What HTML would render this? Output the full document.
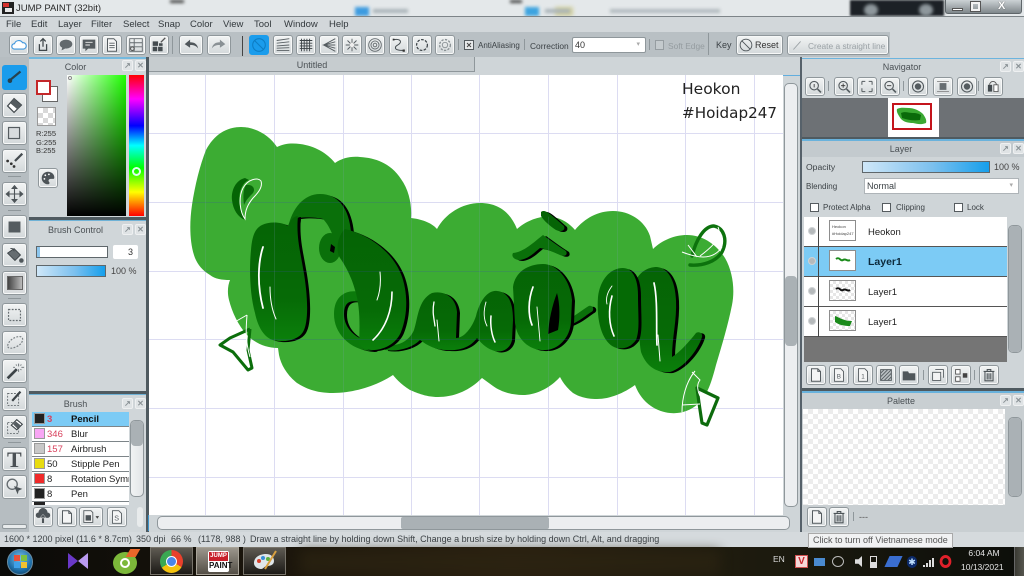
<!DOCTYPE html>
<html lang="en"><head><meta charset="utf-8"><title>JUMP PAINT</title>
<style>
html,body{margin:0;padding:0}
body{width:1024px;height:576px;overflow:hidden;position:relative;background:#d2d7da;font-family:"Liberation Sans",sans-serif;font-size:9px;color:#3c4246}
div,span{position:absolute;box-sizing:border-box;white-space:nowrap}
.b{width:20px;height:20px;border:1px solid #8f979b;border-radius:3px;background:linear-gradient(#f2f4f4,#d3d8da);box-shadow:inset 0 0 0 1px #f7f8f8;overflow:hidden}
.b svg{position:absolute;left:0;top:0;width:100%;height:100%}
.t{text-align:center;color:#4a5054;font-size:9px}
.bar{background:linear-gradient(90deg,#cfe7f8,#7cc0ee 55%,#159fec);border:1px solid #5f676b}
.pt{background:#c3cace}
.px{width:11px;height:11px;background:#dfe3e5;border:1px solid #eef0f1;border-radius:2px;color:#8a9296;font-size:8px;line-height:9px;text-align:center;font-weight:bold}
.ck{width:9px;height:9px;background:#fff;border:1px solid #555b5f}
.row{left:32px;width:97px;height:15px;background:#fff;border-bottom:1px solid #7d8589;color:#222;font-size:9.5px;line-height:15px}
.sw{left:2px;top:1px;width:11px;height:11px;border:1px solid #9a9a9a}
.n{left:15px;color:#d8405c}
.nm{left:39px}
.lr{left:804px;width:203px;height:30px;background:#fff;border-bottom:1px solid #555;color:#222;font-size:9.5px;line-height:31px}
.th{left:25px;top:3px;width:27px;height:21px;border:1px solid #8d8d8d;background:repeating-conic-gradient(#e6e6e6 0 25%,#fff 0 50%) 0 0/6px 6px}
.dot{left:4px;top:10px;width:8px;height:8px;border-radius:50%;background:#b5b9bb;border:1px solid #cfd2d4}
.sep{background:#8f979b}
.scr{background:linear-gradient(90deg,#f1f3f4,#e2e5e7);border:1px solid #8f979b;border-radius:5px}
.thm{background:#aab1b5;border-radius:4px}
.menu span{top:19px;font-size:9.5px;color:#33393d}
.s{filter:drop-shadow(3px 1.5px 0 #000)}
</style></head>
<body>
<svg width="0" height="0" style="position:absolute"><defs>
<symbol id="doc" viewBox="0 0 20 20"><path d="M5 3h7l3 3v11H5z M12 3v3h3" fill="#f4f5f5" stroke="#555c60" stroke-width="1.1"/></symbol>
<symbol id="doclines" viewBox="0 0 20 20"><path d="M5 3h7l3 3v11H5z" fill="#f4f5f5" stroke="#555c60" stroke-width="1.1"/><path d="M7 8h6M7 10.5h6M7 13h6" stroke="#555c60"/></symbol>
<symbol id="trash" viewBox="0 0 20 20"><path d="M4 6h12M8 6V4h4v2M5.5 6.5v10h9v-10M8 8v7M10 8v7M12 8v7" fill="none" stroke="#4d5458" stroke-width="1.2"/></symbol>
</defs></svg>

<!-- title bar -->
<div style="left:0;top:0;width:1024px;height:16px;background:#e4e8ea;overflow:hidden">
 <div style="left:555px;top:7px;width:18px;height:9px;background:#c9c47a;filter:blur(2px);opacity:.7"></div>
 <div style="left:355px;top:7px;width:14px;height:9px;background:#3d9be0;filter:blur(1.5px)"></div>
 <div style="left:525px;top:7px;width:14px;height:9px;background:#3da4e0;filter:blur(1.5px)"></div>
 <div style="left:373px;top:9px;width:35px;height:4px;background:#a9b3b8;filter:blur(1.5px)"></div>
 <div style="left:545px;top:9px;width:25px;height:4px;background:#a9b3b8;filter:blur(1.5px)"></div>
 <div style="left:610px;top:9px;width:110px;height:4px;background:#b2babe;filter:blur(1.5px)"></div>
 <div style="left:170px;top:0;width:14px;height:3px;background:#444;filter:blur(1.5px)"></div>
 <div style="left:510px;top:0;width:12px;height:3px;background:#444;filter:blur(1.5px)"></div>
 <div style="left:850px;top:0;width:94px;height:16px;background:#1c2126;filter:blur(1px)"></div>
 <div style="left:864px;top:4px;width:14px;height:12px;border-radius:50%;background:#8e979c;filter:blur(1.5px)"></div>
 <div style="left:919px;top:4px;width:14px;height:12px;border-radius:50%;background:#8e979c;filter:blur(1.5px)"></div>
 <div style="left:945px;top:0;width:77px;height:14px;background:linear-gradient(#ccd2d5,#7f878b);border:1px solid #5f666a;border-top:0;border-radius:0 0 3px 3px"></div>
 <div style="left:952px;top:8px;width:11px;height:3px;background:#fff;border:1px solid #555"></div>
 <div style="left:971px;top:2px;width:9px;height:9px;background:transparent;border:2px solid #f2f2f2;outline:1px solid #555"></div>
 <div style="left:998px;top:0;color:#fff;font-size:11px;font-weight:bold;text-shadow:0 0 1px #333">X</div>
 <div style="left:2px;top:2px;width:12px;height:12px;background:#222"></div>
 <div style="left:3px;top:3px;width:6px;height:4px;background:#d6322d"></div>
 <div style="left:5px;top:8px;width:7px;height:4px;background:#e8e8e8"></div>
 <div style="left:16px;top:3px;font-size:9.5px;color:#2a2a2a">JUMP PAINT (32bit)</div>
</div>
<div style="left:0;top:16px;width:1024px;height:1px;background:#7d8488"></div>

<!-- menu -->
<div class="menu" style="left:0;top:0;width:1024px;height:32px">
<span style="left:6px">File</span><span style="left:31px">Edit</span><span style="left:58px">Layer</span><span style="left:91px">Filter</span><span style="left:123px">Select</span><span style="left:158px">Snap</span><span style="left:190px">Color</span><span style="left:223px">View</span><span style="left:254px">Tool</span><span style="left:284px">Window</span><span style="left:329px">Help</span>
</div>

<!-- toolbar -->
<div style="left:0;top:32px;width:1024px;height:25px;background:#d2d7da"></div>
<div style="left:0;top:32px;width:890px;height:25px;background:#b9c0c4"></div>
<div class="b" style="left:9px;top:35px"><svg viewBox="0 0 20 20"><path d="M5 14.5a3 3 0 0 1 0-6 5 5 0 0 1 9-1 3.5 3.5 0 0 1 1 7z" fill="#fff" stroke="#3f97dd" stroke-width="1.2"/></svg></div>
<div class="b" style="left:33px;top:35px"><svg viewBox="0 0 20 20"><path d="M6 9v7h8V9M10 12V3M7 6l3-3 3 3" fill="none" stroke="#3f464a" stroke-width="1.4"/></svg></div>
<div class="b" style="left:56px;top:35px"><svg viewBox="0 0 20 20"><ellipse cx="10" cy="9" rx="7" ry="5" fill="#62696d"/><path d="M6 12l-1 4 4-2z" fill="#62696d"/></svg></div>
<div class="b" style="left:79px;top:35px"><svg viewBox="0 0 20 20"><path d="M3 4h14v10H9l-3 3v-3H3z" fill="#555c60"/><path d="M6 7h8M6 10h5" stroke="#eee"/></svg></div>
<div class="b" style="left:102px;top:35px"><svg><use href="#doclines"/></svg></div>
<div class="b" style="left:126px;top:35px"><svg viewBox="0 0 20 20"><path d="M3 3h14v14H3zM3 7.5h14M3 12h14M8 3v14" fill="none" stroke="#62696d"/><circle cx="6" cy="14" r="2" fill="none" stroke="#444"/></svg></div>
<div class="b" style="left:149px;top:35px"><svg viewBox="0 0 20 20"><path d="M3 6h6v5H3zM10 8h4v3h-4zM3 12h5v5H3zM9 12h5v5H9z" fill="#454c50"/><path d="M12 7l5-5" stroke="#555" stroke-width="1.5"/></svg></div>
<div class="sep" style="left:172px;top:36px;width:1px;height:18px"></div>
<div class="b" style="left:179px;top:35px;width:24px"><svg viewBox="0 0 24 20"><path d="M5 9l6-5v3c5 0 8 2 9 7-2-3-5-4-9-4v3z" fill="#50575b"/></svg></div>
<div class="b" style="left:207px;top:35px;width:24px"><svg viewBox="0 0 24 20"><path d="M19 9l-6-5v3c-5 0-8 2-9 7 2-3 5-4 9-4v3z" fill="#8a9195"/></svg></div>
<div class="sep" style="left:242px;top:36px;width:1px;height:20px;background:#444"></div>
<div class="b" style="left:249px;top:35px;background:#1a9cec;border-color:#1a9cec;box-shadow:none"><svg viewBox="0 0 20 20"><circle cx="10" cy="10" r="7" fill="none" stroke="#0d7dc4" stroke-width="1.2"/><path d="M5 5l10 10" stroke="#0d7dc4" stroke-width="1.2"/></svg></div>
<div class="b" style="left:273px;top:35px"><svg viewBox="0 0 20 20"><path d="M3 5l14-2M3 8l14-1.5M3 11l14-1M3 13.5l14-.5M3 16h14" stroke="#5a6165"/></svg></div>
<div class="b" style="left:296px;top:35px"><svg viewBox="0 0 20 20"><path d="M5 3v14M8 3v14M11 3v14M14 3v14M3 5h14M3 8h14M3 11h14M3 14h14" stroke="#3c4347"/></svg></div>
<div class="b" style="left:319px;top:35px"><svg viewBox="0 0 20 20"><path d="M17 3L4 10l13 7M17 6.5L4 10l13 3.5M4 10h13" fill="none" stroke="#555c60"/></svg></div>
<div class="b" style="left:342px;top:35px"><svg viewBox="0 0 20 20"><path d="M10 3v14M3 10h14M5 5l10 10M15 5L5 15" stroke="#555c60"/><circle cx="10" cy="10" r="2.5" fill="#eee"/></svg></div>
<div class="b" style="left:365px;top:35px"><svg viewBox="0 0 20 20" fill="none" stroke="#62696d"><circle cx="10" cy="10" r="7"/><circle cx="10" cy="10" r="4.5"/><circle cx="10" cy="10" r="2"/></svg></div>
<div class="b" style="left:389px;top:35px"><svg viewBox="0 0 20 20"><path d="M4 4c6-1 9 1 7 4s-5 2-5 5 6 3 9 3" fill="none" stroke="#444b4f" stroke-width="1.1"/><rect x="3" y="3" width="2" height="2" fill="#333"/><rect x="14" y="15" width="2.5" height="2.5" fill="#333"/></svg></div>
<div class="b" style="left:412px;top:35px"><svg viewBox="0 0 20 20"><circle cx="10" cy="10" r="6" fill="none" stroke="#3f464a" stroke-width="1.4" stroke-dasharray="3 1.5"/></svg></div>
<div class="b" style="left:435px;top:35px"><svg viewBox="0 0 20 20"><circle cx="10" cy="10" r="3" fill="none" stroke="#8a9195"/><circle cx="10" cy="10" r="6" fill="none" stroke="#8a9195" stroke-width="1.5" stroke-dasharray="2.5 1.5"/></svg></div>
<div class="sep" style="left:458px;top:39px;width:1px;height:11px"></div>
<div class="ck" style="left:464px;top:40px;height:10px;width:10px;background:#e8eaeb"></div>
<svg style="position:absolute;left:464px;top:40px" width="10" height="10"><path d="M3 3l4 4M7 3l-4 4" stroke="#444"/></svg>
<div style="left:478px;top:41px;color:#3c4246;font-size:8px">AntiAliasing</div>
<div class="sep" style="left:524px;top:39px;width:1px;height:11px"></div>
<div style="left:530px;top:41px;color:#3c4246;font-size:8.4px">Correction</div>
<div style="left:572px;top:37px;width:74px;height:16px;background:#fff;border:1px solid #8f979b;border-radius:2px;padding:2px 2px;color:#333">40<span style="right:5px;top:2px;font-size:7px;color:#aaa">&#9662;</span></div>
<div class="sep" style="left:649px;top:39px;width:1px;height:11px"></div>
<div style="left:655px;top:40px;width:9px;height:10px;border:1px solid #969da1;background:#c4cacd"></div>
<div style="left:668px;top:41px;color:#959ca0;font-size:8.4px">Soft Edge</div>
<div class="sep" style="left:708px;top:33px;width:1px;height:22px"></div>
<div style="left:716px;top:40px;color:#3c4246">Key</div>
<div class="b" style="left:736px;top:35px;width:47px"><svg viewBox="0 0 47 20" preserveAspectRatio="xMinYMin"><circle cx="10" cy="10" r="6.5" fill="none" stroke="#4d5458"/><path d="M5.5 5.500l9 9" stroke="#4d5458"/></svg><span style="left:18px;top:4px;color:#333">Reset</span></div>
<div class="b" style="left:787px;top:35px;width:102px"><svg viewBox="0 0 102 20" preserveAspectRatio="xMinYMin"><path d="M6 15l8-9" stroke="#9aa1a5"/></svg><span style="left:20px;top:5px;color:#9aa1a5;font-size:8.4px">Create a straight line</span></div>

<!-- left tools -->
<div style="left:0;top:57px;width:29px;height:475px;background:#b6bdc1"></div>
<div class="b" style="left:2px;top:65px;width:25px;height:25px;background:#1a9cec;border-color:#1a9cec;box-shadow:none"><svg viewBox="0 0 25 25"><path d="M19 6L8 15" stroke="#27424f" stroke-width="2.4"/><circle cx="7.5" cy="16" r="2.5" fill="#27424f"/></svg></div>
<div class="b" style="left:2px;top:93px;width:25px;height:25px"><svg viewBox="0 0 25 25"><path d="M12 5l8 7-8 8-7-7z" fill="#fff" stroke="#444b4f" stroke-width="1.4"/><path d="M8 10l8 7 3-5-7-7z" fill="#555c60"/></svg></div>
<div class="b" style="left:2px;top:121px;width:25px;height:24px"><svg viewBox="0 0 25 24"><rect x="6" y="6" width="12" height="12" fill="#d8dcde" stroke="#555c60" stroke-width="1.3"/></svg></div>
<div class="b" style="left:2px;top:149px;width:25px;height:24px"><svg viewBox="0 0 25 24"><path d="M21 4l-8 8" stroke="#454c50" stroke-width="2.5"/><circle cx="5" cy="12" r="1.5" fill="#333"/><circle cx="9" cy="15" r="1.5" fill="#333"/><circle cx="12" cy="18" r="1.5" fill="#333"/></svg></div>
<div class="sep" style="left:8px;top:176px;width:13px;height:1px"></div>
<div class="b" style="left:2px;top:182px;width:25px;height:24px"><svg viewBox="0 0 25 24"><path d="M12.5 4v16M4.500 12h16M12.5 3l-2.500 3h5zM12.5 21l-2.500-3h5zM3.500 12l3-2.500v5zM21.500 12l-3-2.500v5z" fill="#4d5458" stroke="#4d5458" stroke-width="1.2"/></svg></div>
<div class="sep" style="left:8px;top:210px;width:13px;height:1px"></div>
<div class="b" style="left:2px;top:215px;width:25px;height:24px"><svg viewBox="0 0 25 24"><rect x="6" y="6" width="13" height="12" fill="#555c60"/></svg></div>
<div class="b" style="left:2px;top:243px;width:25px;height:24px"><svg viewBox="0 0 25 24"><path d="M5 10l7-5 7 7-6 6z" fill="#666d71" stroke="#3f464a"/><circle cx="20" cy="18" r="2.5" fill="#50575b"/><path d="M8 5a3 3 0 0 1 4 3" fill="none" stroke="#3f464a"/></svg></div>
<div class="b" style="left:2px;top:271px;width:25px;height:24px;background:#d9dcde"><div style="left:4px;top:4px;width:16px;height:14px;background:linear-gradient(90deg,#444,#bbb);border:1px solid #666"></div></div>
<div class="sep" style="left:8px;top:298px;width:13px;height:1px"></div>
<div class="b" style="left:2px;top:303px;width:25px;height:24px"><svg viewBox="0 0 25 24"><rect x="6" y="6" width="13" height="12" fill="none" stroke="#666d71" stroke-width="1.3" stroke-dasharray="2 1.5"/></svg></div>
<div class="b" style="left:2px;top:331px;width:25px;height:24px"><svg viewBox="0 0 25 24"><path d="M5 15c1-6 8-10 13-10s4 6 0 9-13 6-13 1z" fill="none" stroke="#7a8185" stroke-width="1.3" stroke-dasharray="2 1.5"/></svg></div>
<div class="b" style="left:2px;top:359px;width:25px;height:24px"><svg viewBox="0 0 25 24"><path d="M5 20L15 10" stroke="#3c4347" stroke-width="3"/><path d="M17 4v3M17 10v3M13 8h-2M23 8h-3M20 5l-1 1M14 5l1 1M20 11l-1-1" stroke="#666d71"/></svg></div>
<div class="b" style="left:2px;top:387px;width:25px;height:24px"><svg viewBox="0 0 25 24"><rect x="5" y="6" width="12" height="13" fill="none" stroke="#666d71" stroke-dasharray="2 1.5"/><path d="M19 4L10 14" stroke="#3c4347" stroke-width="2.4"/></svg></div>
<div class="b" style="left:2px;top:415px;width:25px;height:24px"><svg viewBox="0 0 25 24"><rect x="5" y="7" width="12" height="12" fill="none" stroke="#666d71" stroke-dasharray="2 1.5"/><path d="M15 4l6 5-6 6-6-5z" fill="#fff" stroke="#3c4347" stroke-width="1.2"/><path d="M11 9l5 5 3-4-5-4z" fill="#555c60"/></svg></div>
<div class="sep" style="left:8px;top:442px;width:13px;height:1px"></div>
<div class="b" style="left:2px;top:447px;width:25px;height:24px"><span style="left:4px;top:-1px;font:bold 22px 'Liberation Serif',serif;color:#4a5054">T</span></div>
<div class="b" style="left:2px;top:475px;width:25px;height:24px"><svg viewBox="0 0 25 24"><circle cx="10" cy="9" r="5.5" fill="none" stroke="#666d71" stroke-width="1.5"/><path d="M12 11l9 3-4 2-1 4z" fill="#4d5458"/></svg></div>
<div style="left:2px;top:524px;width:25px;height:5px;background:#e8ebec;border:1px solid #8f979b;border-radius:2px"></div>

<!-- colour panel -->
<div style="left:29px;top:57px;width:117px;height:160px;background:#d0d6d9"></div>
<div style="left:29px;top:57px;width:117px;height:2px;background:#74b9de"></div>
<div class="t" style="left:29px;top:62px;width:93px">Color</div>
<div class="px" style="left:122px;top:60px">&#8599;</div><div class="px" style="left:135px;top:60px">&#10005;</div>
<div style="left:42px;top:86px;width:16px;height:16px;background:#fff;border:1px solid #666"></div>
<div style="left:36px;top:80px;width:15px;height:15px;background:#fff;border:2px solid #c4282a"></div>
<div style="left:37px;top:107px;width:19px;height:19px;border:1px solid #999;background:repeating-conic-gradient(#d8d8d8 0 25%,#fff 0 50%) 0 0/10px 10px"></div>
<div style="left:36px;top:130px;font-size:7.5px;line-height:8.5px;color:#333">R:255<br>G:255<br>B:255</div>
<div class="b" style="left:38px;top:168px"><svg viewBox="0 0 20 20"><path d="M10 3a7 7 0 1 0 0 14c2 0 2-2 1-3s0-3 2-3h3c1 0 1-1 1-2 0-3-3-6-7-6z" fill="#4d5458"/><circle cx="7" cy="7" r="1" fill="#fff"/><circle cx="11" cy="6" r="1" fill="#fff"/><circle cx="6" cy="11" r="1" fill="#fff"/></svg></div>
<div style="left:67px;top:75px;width:59px;height:141px;background:linear-gradient(transparent,#000),linear-gradient(90deg,#fff,#1dff00)"></div>
<div style="left:129px;top:75px;width:15px;height:141px;background:linear-gradient(#f00,#f0f 17%,#00f 36%,#0ff 50%,#0f0 66%,#ff0 83%,#f00)"></div>
<div style="left:132px;top:167px;width:9px;height:9px;border:2px solid #dfe;border-radius:50%"></div>
<div style="left:68px;top:76px;width:4px;height:4px;background:#fff;border:1px solid #888;border-radius:50%"></div>
<div style="left:29px;top:217px;width:120px;height:3px;background:#4f5a60"></div>
<div style="left:29px;top:220px;width:117px;height:1px;background:#6fb2d6"></div>

<!-- brush control -->
<div style="left:29px;top:221px;width:117px;height:170px;background:#d0d6d9"></div>
<div class="t" style="left:29px;top:225px;width:93px">Brush Control</div>
<div class="px" style="left:122px;top:224px">&#8599;</div><div class="px" style="left:135px;top:224px">&#10005;</div>
<div style="left:36px;top:246px;width:72px;height:12px;background:linear-gradient(90deg,#8cc6ee 3px,#fff 3px);border:1px solid #5f676b"></div>
<div style="left:113px;top:245px;width:25px;height:14px;background:#fff;border-radius:2px;text-align:right;padding:2px 5px;color:#333">3</div>
<div class="bar" style="left:36px;top:265px;width:70px;height:12px"></div>
<div style="left:111px;top:266px;color:#444">100 %</div>
<div style="left:29px;top:391px;width:120px;height:3px;background:#4f5a60"></div>
<div style="left:29px;top:394px;width:117px;height:1px;background:#6fb2d6"></div>

<!-- brush panel -->
<div style="left:29px;top:395px;width:117px;height:137px;background:#d0d6d9"></div>
<div class="t" style="left:29px;top:399px;width:93px">Brush</div>
<div class="px" style="left:122px;top:398px">&#8599;</div><div class="px" style="left:135px;top:398px">&#10005;</div>
<div class="row" style="top:412px;background:#7ccbf5;font-weight:bold"><div class="sw" style="background:#222"></div><span class="n">3</span><span class="nm" style="color:#111">Pencil</span></div>
<div class="row" style="top:427px"><div class="sw" style="background:#f8a6f4"></div><span class="n">346</span><span class="nm">Blur</span></div>
<div class="row" style="top:442px"><div class="sw" style="background:#c8c8c8"></div><span class="n">157</span><span class="nm">Airbrush</span></div>
<div class="row" style="top:457px"><div class="sw" style="background:#e8dc10"></div><span class="n" style="color:#222">50</span><span class="nm">Stipple Pen</span></div>
<div class="row" style="top:472px;overflow:hidden"><div class="sw" style="background:#f02a2a"></div><span class="n" style="color:#222">8</span><span class="nm">Rotation Symm</span></div>
<div class="row" style="top:487px"><div class="sw" style="background:#222"></div><span class="n" style="color:#222">8</span><span class="nm">Pen</span></div>
<div class="row" style="top:502px;height:3px;border:0"><div style="left:2px;top:0;width:11px;height:3px;background:#222"></div></div>
<div class="scr" style="left:130px;top:420px;width:14px;height:77px"><div class="thm" style="left:0;top:0;width:12px;height:25px"></div></div>
<div class="b" style="left:33px;top:507px"><svg viewBox="0 0 20 20"><path d="M5 11a3 3 0 0 1 0-6 5 5 0 0 1 10 0 3 3 0 0 1 0 6z" fill="#4d5458"/><path d="M6.5 11h7L10 7zM8.5 11h3v6h-3z" fill="#4d5458" stroke="#eee" stroke-width=".5"/></svg></div>
<div class="b" style="left:57px;top:507px"><svg><use href="#doc"/></svg></div>
<div class="b" style="left:79px;top:507px;width:24px"><svg viewBox="0 0 24 20"><path d="M4 3h8l2 2v11H4z" fill="#f0f0f0" stroke="#555c60"/><rect x="6" y="8" width="6" height="6" fill="#4d5458"/><path d="M17 9h4l-2 3z" fill="#444"/></svg></div>
<div class="b" style="left:107px;top:507px"><svg viewBox="0 0 20 20"><path d="M5 3h7l3 3v11H5z" fill="#f4f5f5" stroke="#555c60"/><text x="7" y="14" font-size="8" fill="#555c60" font-family="Liberation Sans">S</text></svg></div>
<div style="left:137px;top:507px;width:6px;height:20px;background:#e8ebec;border-radius:3px"></div>

<!-- doc header -->
<div style="left:146px;top:57px;width:3px;height:475px;background:#4f5a60"></div>
<div style="left:149px;top:57px;width:651px;height:18px;background:#cfd5d8"></div>
<div class="pt" style="left:149px;top:57px;width:326px;height:15px;background:#c6cccf;border-right:1px solid #8f979b;border-bottom:1px solid #8f979b"></div>
<div class="t" style="left:149px;top:60px;width:326px">Untitled</div>

<!-- canvas -->
<svg style="position:absolute;left:149px;top:75px" width="634" height="441" viewBox="149 75 634 441">
<defs>
<linearGradient id="gr" x1="0" y1="0" x2="0" y2="1"><stop offset="0" stop-color="#056405"/><stop offset=".65" stop-color="#066a06"/><stop offset="1" stop-color="#0b800b"/></linearGradient>
<clipPath id="bc"><path d="M241 127C256 127 270 136 277 147C285 143 293 143 300 144C315 146 327 153 335 163C342 158 351 156 360 157C378 158 392 165 401 179C409 190 412 205 411 218C420 219 431 222 437 229C445 214 462 203 480 203C500 203 511 214 517 229C526 221 540 215 552 217C562 218 570 224 575 230C585 218 598 211 613 211C630 211 645 221 650 236L653 249C662 240 675 235 687 235C703 235 717 245 725 258C733 272 735 290 732 305C728 325 722 345 716 365C712 380 708 395 698 404C690 411 680 414 670 413C658 412 642 404 635 385C624 393 610 399 597 399C585 399 578 396 573 393C567 388 563 383 560 377C550 388 536 395 523 395C510 395 500 391 493 386L482 378C470 390 455 397 438 397C425 397 415 392 410 390C402 385 397 380 393 375C378 385 355 393 333 393C315 393 305 388 297 383C287 375 281 365 279 355L278 348C266 348 255 343 247 335C238 325 232 312 229 300C227 292 228 285 230 280C222 280 215 279 210 275C202 270 198 265 195 258C190 245 189 225 192 205C195 185 200 165 206 150C214 135 226 127 241 127Z"/></clipPath>
</defs>
<rect x="149" y="75" width="634" height="441" fill="#fff"/>
<g stroke="#dcdcf2" stroke-width="1">
<path d="M205.5 75v441M274.5 75v441M343.5 75v441M411.5 75v441M479.5 75v441M548.5 75v441M617.5 75v441M685.5 75v441M754.5 75v441"/>
<path d="M149 133.5h634M149 202.5h634M149 271.5h634M149 339.5h634M149 408.5h634M149 477.5h634"/>
</g>
<!-- blob -->
<path fill="#3cac33" d="M241 127C256 127 270 136 277 147C285 143 293 143 300 144C315 146 327 153 335 163C342 158 351 156 360 157C378 158 392 165 401 179C409 190 412 205 411 218C420 219 431 222 437 229C445 214 462 203 480 203C500 203 511 214 517 229C526 221 540 215 552 217C562 218 570 224 575 230C585 218 598 211 613 211C630 211 645 221 650 236L653 249C662 240 675 235 687 235C703 235 717 245 725 258C733 272 735 290 732 305C728 325 722 345 716 365C712 380 708 395 698 404C690 411 680 414 670 413C658 412 642 404 635 385C624 393 610 399 597 399C585 399 578 396 573 393C567 388 563 383 560 377C550 388 536 395 523 395C510 395 500 391 493 386L482 378C470 390 455 397 438 397C425 397 415 392 410 390C402 385 397 380 393 375C378 385 355 393 333 393C315 393 305 388 297 383C287 375 281 365 279 355L278 348C266 348 255 343 247 335C238 325 232 312 229 300C227 292 228 285 230 280C222 280 215 279 210 275C202 270 198 265 195 258C190 245 189 225 192 205C195 185 200 165 206 150C214 135 226 127 241 127Z"/>
<!-- text -->
<text x="682" y="94" font-family="DejaVu Sans,sans-serif" font-size="15.5" fill="#222">Heokon</text>
<text x="682" y="118" font-family="DejaVu Sans,sans-serif" font-size="15.5" fill="#222" textLength="95" lengthAdjust="spacingAndGlyphs">#Hoidap247</text>

<!-- letter D: arch -->
<path class="s" fill="#0a700a" d="M288 228C292 208 304 194 320 194C338 194 349 208 351 232L340 250C334 242 332 228 323 219C315 217 306 217 298 218L296 235Z"/>
<!-- left oval and stem -->
<path class="s" fill="url(#gr)" d="M288 226C282 222 270 221 262 225C254 229 252 238 251 250C249 270 250 295 255 313C258 328 265 338 273 340C285 343 298 340 303 332C309 322 308 295 303 268C300 250 296 236 298 216C294 216 290 220 288 226Z"/>
<!-- u bumps -->
<path class="s" fill="url(#gr)" d="M385 344C398 348 410 340 414 330C418 318 418 300 432 293C445 290 456 298 457 312L456 338C464 338 472 328 476 316C480 300 488 290 497 291C508 292 513 302 513 320L512 340C510 350 500 354 492 350C486 348 480 342 477 338C470 348 458 351 447 350C436 350 428 346 420 340C412 348 398 352 385 350Z"/>
<!-- tail of o -->
<path class="s" fill="none" stroke="#0a700a" stroke-width="6.5" stroke-linecap="round" d="M566 323C576 320 582 314 590 309"/>
<!-- o -->
<path class="s" fill="url(#gr)" d="M513 287C515 272 528 264 543 264C556 264 570 278 572 300L571 322C570 338 558 350 545 350C530 351 517 340 515 323Z"/>
<path fill="#000" d="M557 293C552 306 549 320 548 334L558 330C560 318 560 304 557 293Z"/>
<!-- hat and grave -->
<path class="s" fill="#0a700a" d="M513 253C524 252 534 242 543 235C550 240 558 246 566 251C568 255 565 257 560 255C553 252 547 249 540 248C534 253 528 259 520 260C514 260 511 256 513 253Z"/>
<path class="s" fill="#056405" d="M541 212C545 209 549 213 564 226C566 231 560 232 556 230C550 226 544 221 541 216Z"/>
<!-- n right stem -->
<path class="s" fill="url(#gr)" d="M634 285C638 272 648 267 657 267C668 268 675 280 676 300C677 320 672 338 672 357C680 352 688 343 696 333C699 331 703 333 702 337C698 350 684 368 670 372C656 373 646 366 641 352C638 335 640 310 634 285Z"/>
<!-- n left oval -->
<path class="s" fill="#056a05" d="M598 297C600 280 610 268 623 268C632 268 638 278 638 295C638 315 640 330 636 340C630 348 624 349 617 348C604 345 596 325 598 297Z"/>
<!-- D curl -->
<path class="s" fill="none" stroke="#0b7a0b" stroke-width="10" stroke-linecap="round" d="M360 297C346 294 339 301 339 314C339 330 352 345 372 346"/>
<!-- D small loop -->
<ellipse cx="330" cy="248" rx="11" ry="15" fill="#0a700a"/>
<path fill="#000" d="M331 244l4 3-1 6-4-2z"/>
<!-- D body -->
<path class="s" fill="url(#gr)" d="M345 229C370 235 392 252 401 274C408 292 408 314 401 332C396 344 384 350 372 350C366 350 362 348 359 344C360 325 360 305 355 290C352 278 345 265 340 258C335 250 338 235 345 229Z"/>
<!-- grid faint over blob -->
<g clip-path="url(#bc)">
<path d="M149 202.5h634M149 271.5h634M149 339.5h634" stroke="#3b4fa8" stroke-width="1" opacity=".22"/>
<path d="M205.5 75v441M274.5 75v441M343.5 75v441M411.5 75v441M479.5 75v441M548.5 75v441M617.5 75v441M685.5 75v441" stroke="#8a9ad0" stroke-width="1" opacity=".16"/>
</g>
<!-- white highlights -->
<g fill="none" stroke="#fff" stroke-linecap="round">
<path d="M263 247C258 262 257 285 263 308" stroke-width="1.8"/>
<path d="M270 287C270 300 272 310 276 319" stroke-width="1"/>
<path d="M380 272C381 282 380 292 377 300" stroke-width="1"/>
<path d="M392 292C392 310 386 328 373 340" stroke-width="1.6"/>
<path d="M434 302C432 312 434 318 435 326" stroke-width="1.3"/>
<path d="M437 320L439 341" stroke-width="1"/>
<path d="M486 302C483 312 484 320 487 326" stroke-width=".9"/>
<path d="M491 316C490 326 492 336 495 342" stroke-width="1.5"/>
<path d="M533 287C528 300 528 315 532 325" stroke-width="1.7"/>
<path d="M537 307L540 341" stroke-width=".9"/>
<path d="M612 286C606 294 606 300 607 304" stroke-width=".9"/>
<path d="M612 296C608 310 609 325 614 336" stroke-width="1.6"/>
<path d="M654 283C658 300 656 330 657 345" stroke-width="1.7"/>
<path d="M658 335L660 361" stroke-width="1"/>
</g>
<!-- leaf top-left -->
<path d="M245 178C236 180 231 190 232 200C233 210 238 217 245 220C240 212 238 202 240 192C242 186 244 182 249 180Z" fill="#056405"/>
<path d="M246 185C252 184 256 188 253 193C249 197 246 200 244 205C243 198 243 190 246 185Z" fill="#0a6a0a"/>
<path d="M245 219C240 212 238 198 243 188C248 179 258 177 261 181C263 187 258 193 253 198C248 204 245 210 245 219Z" fill="none" stroke="#fff" stroke-width="1"/>
<!-- arrow left -->
<path d="M250 329L230 338L220 345L233 352L248 370L252 368L248 350L250 329" fill="none" stroke="#0b6e0b" stroke-width="3" stroke-linejoin="round"/>
<path d="M247 315C246 328 245 340 250 357M247 315L233 323" fill="none" stroke="#fff" stroke-width="1"/>
<!-- flourish right -->
<path d="M692 256C696 240 704 226 714 226C724 228 728 240 722 252C716 262 702 266 690 265" fill="none" stroke="#0d720d" stroke-width="3.4" stroke-linecap="round"/>
<path d="M682 252C695 257 712 262 722 247M718 227C722 236 716 244 700 256M688 245L697 257" fill="none" stroke="#fff" stroke-width="1"/>
<!-- arrow bottom-right -->
<path d="M697 388L718 398L707 425L702 423L699 403Z" fill="#fff" stroke="#0d6b0d" stroke-width="3.2" stroke-linejoin="round"/>
<path d="M695 371C686 382 682 398 682 412M692 372L700 380C696 385 698 392 700 396M682 405L700 404" fill="none" stroke="#fff" stroke-width="1"/>
</svg>

<!-- canvas edge strips -->
<div style="left:783px;top:75px;width:17px;height:457px;background:#cfd5d8"></div>
<div class="scr" style="left:784px;top:83px;width:14px;height:424px;background:#eceef0"><div class="thm" style="left:0;top:192px;width:12px;height:70px"></div></div>
<div style="left:783px;top:75px;width:17px;height:1px;background:#62aede"></div>
<div style="left:149px;top:515px;width:651px;height:17px;background:#cfd5d8"></div>
<div style="left:148px;top:515px;width:1px;height:16px;background:#3d95cc"></div>
<div class="scr" style="left:157px;top:516px;width:633px;height:14px;background:#eceef0"><div class="thm" style="left:243px;top:0;width:148px;height:12px;border-radius:2px"></div></div>
<div style="left:800px;top:57px;width:2px;height:475px;background:#56616a"></div>

<!-- navigator -->
<div style="left:802px;top:58px;width:222px;height:40px;background:#cfd5d8"></div>
<div style="left:802px;top:58px;width:222px;height:1px;background:#6db4de"></div>
<div class="t" style="left:802px;top:62px;width:200px">Navigator</div>
<div class="px" style="left:1000px;top:61px">&#8599;</div><div class="px" style="left:1013px;top:61px">&#10005;</div>
<div class="b" style="left:805px;top:77px;height:19px"><svg viewBox="0 0 20 20"><circle cx="9" cy="9" r="5" fill="none" stroke="#555c60" stroke-width="1.3"/><path d="M13 13l4 4" stroke="#555c60" stroke-width="2"/><path d="M9 7v4" stroke="#333"/></svg></div>
<div class="sep" style="left:828px;top:81px;width:1px;height:10px"></div>
<div class="b" style="left:834px;top:77px;height:19px"><svg viewBox="0 0 20 20"><circle cx="9" cy="9" r="5" fill="none" stroke="#555c60" stroke-width="1.3"/><path d="M13 13l4 4" stroke="#555c60" stroke-width="2"/><path d="M6.5 9h5M9 6.5v5" stroke="#333"/></svg></div>
<div class="b" style="left:857px;top:77px;height:19px"><svg viewBox="0 0 20 20"><path d="M4 4h4M4 4v4M16 4h-4M16 4v4M4 16h4M4 16v-4M16 16h-4M16 16v-4" stroke="#555c60" stroke-width="1.2" fill="none"/></svg></div>
<div class="b" style="left:880px;top:77px;height:19px"><svg viewBox="0 0 20 20"><circle cx="9" cy="9" r="5" fill="none" stroke="#555c60" stroke-width="1.3"/><path d="M13 13l4 4" stroke="#555c60" stroke-width="2"/><path d="M6.5 9h5" stroke="#333"/></svg></div>
<div class="sep" style="left:903px;top:81px;width:1px;height:10px"></div>
<div class="b" style="left:908px;top:77px;height:19px"><svg viewBox="0 0 20 20"><circle cx="10" cy="10" r="6.5" fill="none" stroke="#555c60" stroke-width="1.3"/><circle cx="10" cy="10" r="3.8" fill="#555c60"/></svg></div>
<div class="b" style="left:933px;top:77px;height:19px"><svg viewBox="0 0 20 20"><rect x="6" y="6" width="8" height="8" fill="#666d71"/><path d="M3 4h14M3 16h14" stroke="#888"/></svg></div>
<div class="b" style="left:957px;top:77px;height:19px"><svg viewBox="0 0 20 20"><circle cx="10" cy="10" r="6.5" fill="none" stroke="#555c60" stroke-width="1.3"/><circle cx="10" cy="10" r="3.8" fill="#555c60"/></svg></div>
<div class="sep" style="left:978px;top:81px;width:1px;height:10px"></div>
<div class="b" style="left:983px;top:77px;height:19px"><svg viewBox="0 0 20 20"><rect x="4" y="8" width="5" height="8" fill="#444b4f"/><rect x="11" y="8" width="5" height="8" fill="#fff" stroke="#555"/><path d="M6 8a4 4 0 0 1 8 0" fill="none" stroke="#555"/></svg></div>
<div style="left:802px;top:98px;width:222px;height:39px;background:#6d7175"></div>
<div style="left:888px;top:98px;width:51px;height:39px;background:#fff"></div>
<svg style="position:absolute;left:892px;top:103px" width="40" height="27" viewBox="0 0 40 27"><rect x="1" y="1" width="38" height="25" fill="#fff" stroke="#c4141c" stroke-width="2"/><path d="M5 6c4-2 8-1 12-1s10 2 14 6c2 3 4 6 3 9-5 2-9 1-13 0-5 0-9-1-12-4-2-3-5-7-4-10z" fill="#3aa832"/><path d="M9 10c4-2 8 0 12 0s6 1 8 2l-1 5c-6 1-12 0-18-2z" fill="#0a6a0a"/></svg>

<!-- layer -->
<div style="left:802px;top:137px;width:222px;height:2px;background:#4f5a60"></div>
<div style="left:802px;top:139px;width:222px;height:249px;background:#cfd5d8"></div>
<div style="left:802px;top:139px;width:222px;height:2px;background:#69b2dc"></div>
<div class="pt" style="left:802px;top:141px;width:222px;height:16px"></div>
<div class="t" style="left:802px;top:144px;width:198px">Layer</div>
<div class="px" style="left:1000px;top:143px">&#8599;</div><div class="px" style="left:1013px;top:143px">&#10005;</div>
<div style="left:806px;top:162px;font-size:8.6px">Opacity</div>
<div class="bar" style="left:862px;top:161px;width:128px;height:12px"></div>
<div style="left:994px;top:162px;color:#444">100 %</div>
<div style="left:806px;top:182px;font-size:8px">Blending</div>
<div style="left:864px;top:178px;width:155px;height:16px;background:#fff;border:1px solid #aeb4b8;padding:2px;color:#3c4246">Normal<span style="right:5px;top:2px;font-size:7px;color:#aaa">&#9662;</span></div>
<div class="ck" style="left:810px;top:203px"></div><div style="left:823px;top:203px;font-size:8px">Protect Alpha</div>
<div class="ck" style="left:882px;top:203px"></div><div style="left:896px;top:203px;font-size:8px">Clipping</div>
<div class="ck" style="left:954px;top:203px"></div><div style="left:967px;top:203px;font-size:8px">Lock</div>
<div style="left:804px;top:337px;width:203px;height:25px;background:#757575"></div>
<div class="lr" style="top:217px"><div class="dot"></div><div style="left:14px;top:0;width:1px;height:30px;background:#444"></div><div class="th" style="background:#fff;font-size:4px;line-height:7px;color:#444;padding:2px">Heokon<br>#Hoidap247</div><span style="left:64px">Heokon</span></div>
<div class="lr" style="top:247px;background:#7ccbf5;font-weight:bold;font-size:10.5px"><div class="dot"></div><div style="left:14px;top:0;width:1px;height:30px;background:#444"></div><div class="th" style="background:#fff"><svg width="25" height="19"><path d="M6 8c4-3 4 3 7 1s4 2 7 0" fill="none" stroke="#1a8a1a" stroke-width="2"/></svg></div><span style="left:64px;color:#0c2a3c">Layer1</span></div>
<div class="lr" style="top:277px"><div class="dot"></div><div style="left:14px;top:0;width:1px;height:30px;background:#444"></div><div class="th"><svg width="25" height="19"><path d="M6 8c4-3 4 3 7 1s4 2 7 0" fill="none" stroke="#111" stroke-width="2"/></svg></div><span style="left:64px">Layer1</span></div>
<div class="lr" style="top:307px;height:30px"><div class="dot"></div><div style="left:14px;top:0;width:1px;height:30px;background:#444"></div><div class="th"><svg width="25" height="19"><path d="M5 5c4 1 8 5 17 5l-2 5c-6 0-11-1-15-4z" fill="#1a8a1a"/></svg></div><span style="left:64px">Layer1</span></div>
<div class="scr" style="left:1008px;top:225px;width:14px;height:128px"><div class="thm" style="left:0;top:0;width:12px;height:126px"></div></div>
<div class="b" style="left:806px;top:365px"><svg><use href="#doc"/></svg></div>
<div class="b" style="left:829px;top:365px"><svg viewBox="0 0 20 20"><path d="M5 3h7l3 3v11H5z" fill="#f4f5f5" stroke="#555c60"/><text x="7.5" y="14" font-size="7" fill="#555c60" font-family="Liberation Sans">B</text></svg></div>
<div class="b" style="left:853px;top:365px"><svg viewBox="0 0 20 20"><path d="M5 3h7l3 3v11H5z" fill="#f4f5f5" stroke="#555c60"/><text x="8" y="14" font-size="7" fill="#555c60" font-family="Liberation Sans">1</text></svg></div>
<div class="b" style="left:876px;top:365px"><svg viewBox="0 0 20 20"><rect x="4" y="4" width="12" height="12" fill="#b9bfc2" stroke="#555c60"/><path d="M4 8l4-4M4 12l8-8M4 16l12-12M8 16l8-8M12 16l4-4" stroke="#555c60"/></svg></div>
<div class="b" style="left:899px;top:365px"><svg viewBox="0 0 20 20"><path d="M3 6h6l1 2h7v8H3z" fill="#50575b"/></svg></div>
<div class="sep" style="left:923px;top:370px;width:1px;height:10px"></div>
<div class="b" style="left:928px;top:365px"><svg viewBox="0 0 20 20"><path d="M7 4h9v9M4 7h9v9H4z" fill="#f2f3f3" stroke="#555c60"/></svg></div>
<div class="b" style="left:951px;top:365px"><svg viewBox="0 0 20 20"><rect x="4" y="4" width="5" height="5" fill="#fff" stroke="#555"/><rect x="4" y="12" width="5" height="5" fill="#fff" stroke="#555"/><rect x="12" y="8" width="5" height="5" fill="#444"/></svg></div>
<div class="sep" style="left:974px;top:370px;width:1px;height:10px"></div>
<div class="b" style="left:979px;top:365px"><svg><use href="#trash"/></svg></div>

<!-- palette -->
<div style="left:802px;top:388px;width:222px;height:3px;background:#4f5a60"></div>
<div style="left:802px;top:391px;width:222px;height:141px;background:#c9cfd2"></div>
<div style="left:802px;top:391px;width:222px;height:2px;background:#69b2dc"></div>
<div class="t" style="left:802px;top:396px;width:198px">Palette</div>
<div class="px" style="left:1000px;top:395px">&#8599;</div><div class="px" style="left:1013px;top:395px">&#10005;</div>
<div style="left:803px;top:409px;width:202px;height:96px;background:repeating-conic-gradient(#ececec 0 25%,#fff 0 50%) 0 0/10px 10px"></div>
<div class="scr" style="left:1008px;top:417px;width:14px;height:80px"><div class="thm" style="left:0;top:0;width:12px;height:78px"></div></div>
<div class="b" style="left:807px;top:507px"><svg><use href="#doc"/></svg></div>
<div class="b" style="left:829px;top:507px"><svg><use href="#trash"/></svg></div>
<div class="sep" style="left:853px;top:512px;width:1px;height:9px"></div>
<div style="left:859px;top:512px;color:#555">---</div>

<!-- status -->
<div style="left:0;top:532px;width:1024px;height:15px;background:#d5dadd"></div>
<div style="left:4px;top:534px;color:#3c4246">1600 * 1200 pixel</div>
<div style="left:76px;top:534px;color:#3c4246">(11.6 * 8.7cm)</div>
<div style="left:136px;top:534px;color:#3c4246">350 dpi</div>
<div style="left:171px;top:534px;color:#3c4246">66 %</div>
<div style="left:198px;top:534px;color:#3c4246">(1178, 988 )</div>
<div style="left:250px;top:534px;color:#3c4246">Draw a straight line by holding down Shift, Change a brush size by holding down Ctrl, Alt, and dragging</div>
<div style="left:808px;top:533px;width:145px;height:15px;background:#f1f2f3;border:1px solid #a9a9a9;color:#555;font-size:9px;padding:1px 4px;z-index:3">Click to turn off Vietnamese mode</div>

<!-- taskbar -->
<div style="left:0;top:547px;width:1024px;height:29px;background:linear-gradient(90deg,#0a0a08,#1d170c 30%,#2a2010 50%,#1c1a0e 75%,#0c0e0a)"></div>
<div style="left:300px;top:550px;width:420px;height:24px;background:#2c2412;filter:blur(6px);opacity:.7"></div>
<div style="left:7px;top:549px;width:26px;height:26px;border-radius:50%;background:radial-gradient(circle at 50% 35%,#7cc0e8,#1e6fa8 60%,#0a3050);border:1px solid #6a8ea4"></div>
<div style="left:14px;top:555px;width:6px;height:6px;background:#e8503a"></div><div style="left:21px;top:555px;width:6px;height:6px;background:#7ec23f"></div>
<div style="left:14px;top:562px;width:6px;height:6px;background:#3fa0e8"></div><div style="left:21px;top:562px;width:6px;height:6px;background:#f2c230"></div>
<svg style="position:absolute;left:66px;top:551px" width="24" height="20" viewBox="0 0 24 20"><path d="M2 2l10 8L2 18z" fill="#6a38c8"/><path d="M22 2L12 10l10 8z" fill="#b99af0"/></svg>
<div style="left:113px;top:552px;width:24px;height:22px;border-radius:50%;background:#7cb83a"></div>
<div style="left:120px;top:558px;width:10px;height:10px;border-radius:50%;background:#7cb83a;border:2px solid #fff"></div>
<div style="left:128px;top:549px;width:10px;height:8px;background:#e8672a;transform:skewX(-30deg)"></div>
<div style="left:150px;top:547px;width:43px;height:28px;background:linear-gradient(#5e5a52,#1c1a16);border:1px solid #77736a"></div>
<div style="left:160px;top:550px;width:23px;height:23px;border-radius:50%;background:conic-gradient(#e8402c 0 33%,#f4c20d 33% 66%,#3aa853 66% 100%)"></div>
<div style="left:166px;top:556px;width:11px;height:11px;border-radius:50%;background:#4a86e8;border:1.5px solid #fff"></div>
<div style="left:196px;top:547px;width:43px;height:28px;background:linear-gradient(#9b968c,#544f46);border:1px solid #a8a398"></div>
<div style="left:208px;top:551px;width:21px;height:21px;background:#fff;border-radius:2px"></div>
<div style="left:209px;top:552px;width:19px;height:9px;background:#c8202a;color:#fff;font:bold 6px 'Liberation Sans',sans-serif;text-align:center;line-height:9px">JUMP</div>
<div style="left:209px;top:561px;width:19px;height:10px;color:#111;font:bold 8px 'Liberation Sans',sans-serif;text-align:center;line-height:10px">PAINT</div>
<div style="left:243px;top:547px;width:43px;height:28px;background:linear-gradient(#5e5a52,#1c1a16);border:1px solid #77736a"></div>
<svg style="position:absolute;left:252px;top:549px" width="26" height="25" viewBox="0 0 26 25"><path d="M2 14C2 8 8 5 14 5c5 0 8 3 8 7s-4 5-7 5-3 3-6 3-7-2-7-6z" fill="#dfe6ea"/><circle cx="7" cy="12" r="2" fill="#d8402c"/><circle cx="11" cy="9" r="2" fill="#3a90d8"/><circle cx="16" cy="10" r="2" fill="#5ab040"/><path d="M24 2L13 20" stroke="#d8a040" stroke-width="2"/></svg>
<div style="left:773px;top:554px;color:#d8d8d8;font-size:8.5px">EN</div>
<div style="left:795px;top:555px;width:13px;height:13px;background:#f5d9d9;border:1px solid #d05050;color:#c8242c;font:bold 10px/11px 'Liberation Sans',sans-serif;text-align:center">V</div>
<div style="left:814px;top:558px;width:11px;height:8px;background:#4a8ad0"></div>
<div style="left:832px;top:556px;width:12px;height:11px;border:1px solid #bbb;border-radius:50%"></div>
<div style="left:855px;top:556px;width:7px;height:11px;background:#dcdcdc;clip-path:polygon(0 30%,50% 30%,100% 0,100% 100%,50% 70%,0 70%)"></div>
<div style="left:870px;top:556px;width:7px;height:12px;border:1px solid #ddd;background:linear-gradient(transparent 50%,#ddd 50%)"></div>
<div style="left:887px;top:556px;width:13px;height:11px;background:#3a6ed0;transform:skewX(-25deg)"></div>
<div style="left:907px;top:556px;width:10px;height:12px;background:#0c2a6a;border-radius:5px;color:#bfe0ff;font-size:9px;line-height:12px;text-align:center">&#10033;</div>
<svg style="position:absolute;left:922px;top:556px" width="14" height="12"><path d="M1 11h2V9H1zM4 11h2V7H4zM7 11h2V4H7zM10 11h2V2h-2z" fill="#ddd"/></svg>
<div style="left:939px;top:555px;width:13px;height:13px;border:3px solid #e0202a;border-radius:50%;transform:scaleX(.9)"></div>
<div style="left:966px;top:548px;width:36px;color:#e4e4e4;font-size:8.5px;text-align:center">6:04 AM</div>
<div style="left:961px;top:562px;color:#e4e4e4;font-size:8.5px">10/13/2021</div>
<div style="left:1014px;top:547px;width:10px;height:29px;background:linear-gradient(90deg,#3a3a34,#56564e);border-left:1px solid #666"></div>
</body></html>
